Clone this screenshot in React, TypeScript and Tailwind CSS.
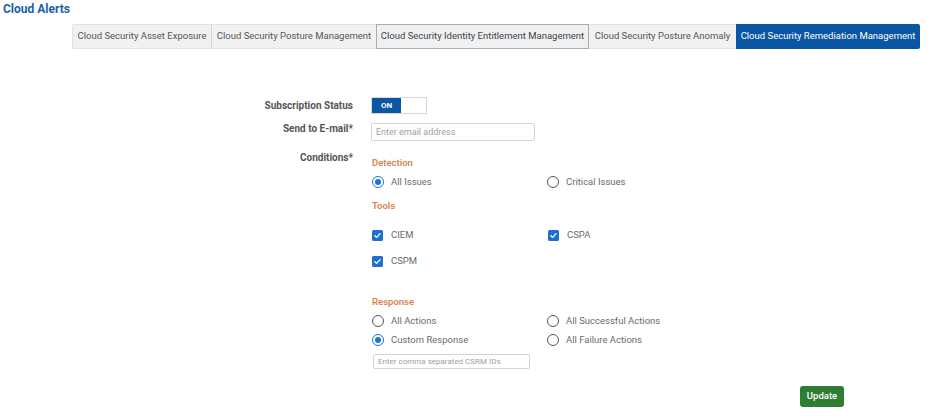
import { useState } from "react";

const tabs = [
  { label: "Cloud Security Asset Exposure", w: "w-[139px]" },
  { label: "Cloud Security Posture Management", w: "w-[165px]" },
  { label: "Cloud Security Identity Entitlement Management", w: "w-[213px]" },
  { label: "Cloud Security Posture Anomaly", w: "w-[147px]" },
  { label: "Cloud Security Remediation Management", w: "w-[184px]" },
];

function Radio({ label, checked }: { label: string; checked?: boolean }) {
  return (
    <label className="flex h-[14px] items-center gap-[7px] text-[9.5px] text-[#6b6b6b]">
      <span
        className={`flex h-[12px] w-[12px] items-center justify-center rounded-full border-[1.5px] ${
          checked ? "border-[#1a73d9]" : "border-[#555]"
        }`}
      >
        {checked && <span className="h-[6px] w-[6px] rounded-full bg-[#1a73d9]" />}
      </span>
      {label}
    </label>
  );
}

function Check({ label }: { label: string }) {
  return (
    <label className="flex h-[14px] items-center gap-[8px] text-[9.5px] text-[#6b6b6b]">
      <span className="flex h-[11px] w-[11px] items-center justify-center rounded-[1.5px] bg-[#1f6fd1]">
        <svg viewBox="0 0 12 12" className="h-[9px] w-[9px]" fill="none" stroke="white" strokeWidth={1.8}>
          <path d="M2.5 6.2l2.3 2.3 4.7-5" strokeLinecap="round" strokeLinejoin="round" />
        </svg>
      </span>
      {label}
    </label>
  );
}

function Heading({ children }: { children: string }) {
  return <div className="h-[12px] text-[9.5px] font-semibold leading-[12px] text-[#d9844f]">{children}</div>;
}

export default function App() {
  const [on, setOn] = useState(true);

  return (
    <div className="h-[417px] w-[940px] bg-white font-['Roboto',sans-serif]">
      <div className="pl-[3px] text-[12px] font-bold leading-[18px] text-[#1a5fac]">Cloud Alerts</div>

      {/* tabs */}
      <div className="ml-[72px] mt-[6px] flex h-[25px]">
        {tabs.map((t, i) => (
          <div
            key={t.label}
            className={`flex items-center justify-center whitespace-nowrap text-[9.5px] ${t.w} ${
              i === 4
                ? "rounded-r-[2px] bg-[#0b56a3] text-white"
                : i === 2
                ? "border border-[#a9aeb3] bg-[#eef0f2] text-[#444]"
                : `border-y border-[#e2e2e2] bg-[#f1f1f1] text-[#555] ${i === 0 ? "rounded-l-[2px] border-l" : ""} ${
                    i === 1 ? "border-l border-l-[#d6d6d6]" : ""
                  }`
            }`}
          >
            {t.label}
          </div>
        ))}
      </div>

      {/* form */}
      <div className="mt-[48px] flex flex-col">
        <div className="flex h-[17px] items-center">
          <div className="w-[353px] text-right text-[10px] font-bold text-[#555]">Subscription Status</div>
          <button
            onClick={() => setOn(!on)}
            className="ml-[18px] flex h-[17px] w-[56px] border border-[#d8d8d8]"
          >
            <span className="flex h-full w-[29px] items-center justify-center bg-[#0b56a3] text-[8px] font-bold text-white">
              {on ? "ON" : "OFF"}
            </span>
          </button>
        </div>

        <div className="mt-[9px] flex">
          <div className="w-[353px] text-right text-[10px] font-bold leading-[12px] text-[#555]">Send to E-mail*</div>
          <input
            placeholder="Enter email address"
            className="ml-[18px] h-[18px] w-[164px] rounded-[2px] border border-[#d4d4d4] px-[4px] text-[9px] outline-none placeholder:text-[#a0a0a0]"
          />
        </div>

        <div className="mt-[11px] flex">
          <div className="w-[353px] text-right text-[10px] font-bold leading-[12px] text-[#555]">Conditions*</div>
          <div className="ml-[19px] flex flex-col">
            <div className="mt-[5px]">
              <Heading>Detection</Heading>
            </div>
            <div className="mt-[6px] grid grid-cols-[175px_175px]">
              <Radio label="All Issues" checked />
              <Radio label="Critical Issues" />
            </div>
            <div className="mt-[11px]">
              <Heading>Tools</Heading>
            </div>
            <div className="mt-[16px] grid grid-cols-[176px_175px] gap-y-[12px]">
              <Check label="CIEM" />
              <Check label="CSPA" />
              <Check label="CSPM" />
            </div>
            <div className="mt-[28px]">
              <Heading>Response</Heading>
            </div>
            <div className="mt-[6px] grid grid-cols-[175px_175px] gap-y-[5px]">
              <Radio label="All Actions" />
              <Radio label="All Successful Actions" />
              <Radio label="Custom Response" checked />
              <Radio label="All Failure Actions" />
            </div>
            <input
              placeholder="Enter comma separated CSRM IDs"
              className="ml-[1px] mt-[7px] h-[15px] w-[157px] rounded-[2px] border border-[#d4d4d4] px-[4px] text-[8px] outline-none placeholder:text-[#a0a0a0]"
            />
          </div>
        </div>

        <div className="mt-[17px] flex">
          <button className="ml-[800px] h-[21px] w-[44px] rounded-[3px] bg-[#2e7d32] text-[9.5px] font-medium text-white">
            Update
          </button>
        </div>
      </div>
    </div>
  );
}
